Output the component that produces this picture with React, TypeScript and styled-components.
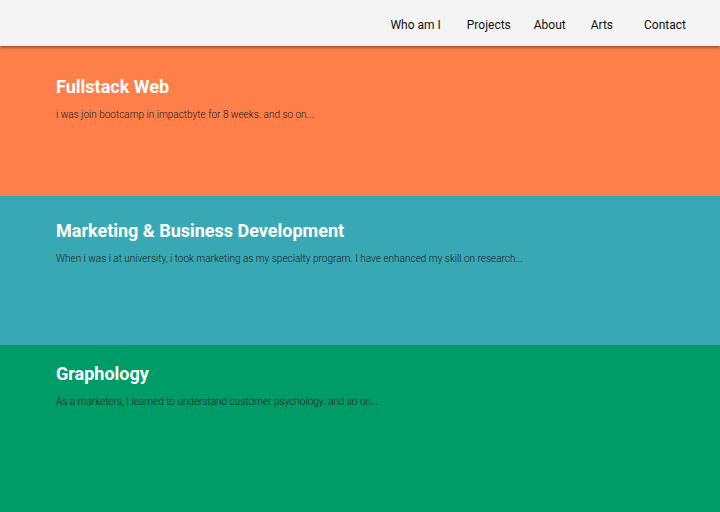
import React from "react";
import styled, { createGlobalStyle } from "styled-components";

const Global = createGlobalStyle`
  html, body { margin: 0; padding: 0; }
  body { font-family: Roboto, "Liberation Sans", sans-serif; background: #009c67; }
`;

const Header = styled.header`
  height: 46px;
  background: #f4f4f4;
  display: flex;
  align-items: center;
  justify-content: flex-end;
  padding: 3px 34px 0 0;
  box-sizing: border-box;
  position: relative;
  z-index: 2;
  box-shadow: 0 2px 2px rgba(120, 50, 20, 0.55);
`;

const Nav = styled.nav`
  display: flex;
  align-items: center;
`;

const NavLink = styled.a<{ $gap: number }>`
  font-size: 12px;
  color: #111;
  text-decoration: none;
  margin-left: ${(p) => p.$gap}px;
  line-height: 1;
`;

const Section = styled.section<{ $bg: string; $h: number; $top: number }>`
  background: ${(p) => p.$bg};
  height: ${(p) => p.$h}px;
  padding: ${(p) => p.$top}px 56px 0;
  box-sizing: border-box;
`;

const Title = styled.h2`
  margin: 0;
  font-size: 18px;
  font-weight: 700;
  color: #fff;
  line-height: 20px;
`;

const Text = styled.p`
  margin: 11px 0 0;
  font-size: 10px;
  font-weight: 300;
  color: #1a1a1a;
  line-height: 14px;
`;

const links: [string, number][] = [
  ["Who am I", 0],
  ["Projects", 26],
  ["About", 23],
  ["Arts", 25],
  ["Contact", 31],
];

const sections = [
  { bg: "#ff7f4a", h: 150, top: 31, title: "Fullstack Web", text: "i was join bootcamp in impactbyte for 8 weeks. and so on..." },
  { bg: "#38a9b4", h: 149, top: 25, title: "Marketing & Business Development", text: "When i was i at university, i took marketing as my specialty program. I have enhanced my skill on research..." },
  { bg: "#009c67", h: 167, top: 19, title: "Graphology", text: "As a marketers, I learned to understand customer psychology. and so on..." },
];

export default function App() {
  return (
    <>
      <Global />
      <Header>
        <Nav>
          {links.map(([l, g]) => (
            <NavLink key={l} $gap={g}>{l}</NavLink>
          ))}
        </Nav>
      </Header>
      {sections.map((s) => (
        <Section key={s.title} $bg={s.bg} $h={s.h} $top={s.top}>
          <Title>{s.title}</Title>
          <Text>{s.text}</Text>
        </Section>
      ))}
    </>
  );
}
